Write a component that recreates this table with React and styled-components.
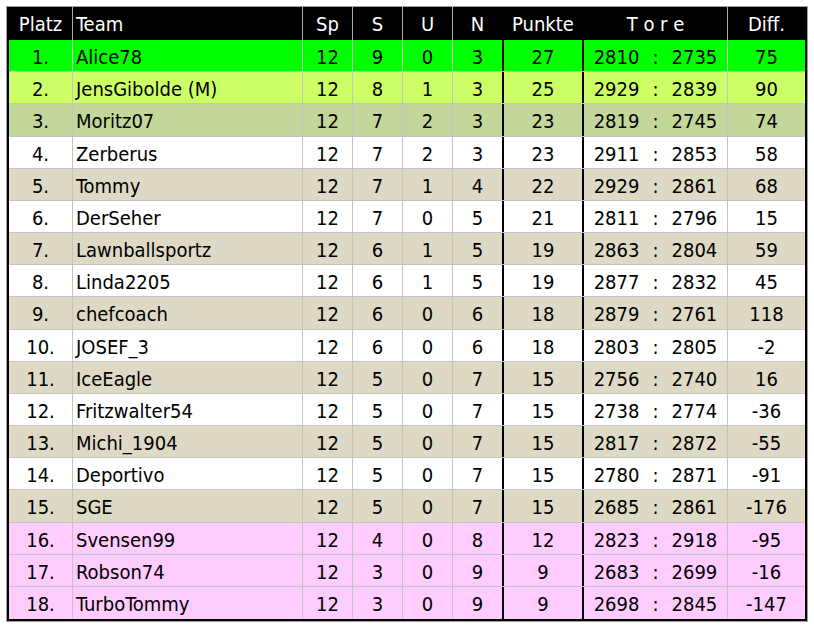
import React from 'react';
import styled, { createGlobalStyle } from 'styled-components';

const GlobalStyle = createGlobalStyle`
  html, body { margin: 0; padding: 0; background: #ffffff; }
  body {
    font-family: "DejaVu Sans Condensed", "DejaVu Sans", sans-serif;
    font-stretch: condensed;
    color: #000;
  }
  * { box-sizing: border-box; }
`;

const COLS = '64px 230px 50px 50px 50px 51px 80px 144px 77px';

const COLORS = {
  green: '#00ff00',
  lime: '#ccff66',
  olive: '#c4d79b',
  white: '#ffffff',
  tan: '#ddd9c4',
  pink: '#ffccff',
};

const Page = styled.div`
  padding: 6px 0 0 6px;
`;

const Board = styled.div`
  width: 802px;
  border: 1px solid #a0a0a0;
`;

const HeadRow = styled.div`
  display: grid;
  grid-template-columns: ${COLS};
  height: 33px;
  background: #000;
  border-left: 2px solid #000;
  border-right: 2px solid #000;
`;

const HeadCell = styled.div`
  display: flex;
  align-items: center;
  justify-content: ${(p) => (p.$align === 'left' ? 'flex-start' : 'center')};
  padding-left: ${(p) => (p.$align === 'left' ? '3px' : '0')};
  color: #ffffff;
  font-size: 20px;
  white-space: pre;
  border-right: ${(p) =>
    p.$last ? 'none' : p.$thick ? '2px solid #000' : '1px solid #a8a8a8'};
`;

const Body = styled.div`
  display: grid;
  grid-template-rows: repeat(18, 1fr);
  height: 581px;
  border: 2px solid #000;
  border-top: none;
`;

const Row = styled.div`
  display: grid;
  grid-template-columns: ${COLS};
  background: ${(p) => COLORS[p.$tone]};
  border-bottom: ${(p) => (p.$last ? 'none' : '1px solid #c4c4c4')};
`;

const Cell = styled.div`
  display: flex;
  align-items: center;
  justify-content: ${(p) => (p.$align === 'left' ? 'flex-start' : 'center')};
  padding-left: ${(p) => (p.$align === 'left' ? '3px' : '0')};
  padding-top: 3px;
  font-size: 20px;
  white-space: nowrap;
  border-right: ${(p) =>
    p.$last ? 'none' : p.$thick ? '2px solid #000' : '1px solid #c4c4c4'};
`;

const GoalPair = styled.div`
  display: grid;
  grid-template-columns: 1fr auto 1fr;
  column-gap: 13px;
  width: 100%;
`;

const GoalLeft = styled.span`
  text-align: right;
`;

const GoalRight = styled.span`
  text-align: left;
`;

const rows = [
  [1, 'Alice78', 12, 9, 0, 3, 27, 2810, 2735, 75, 'green'],
  [2, 'JensGibolde (M)', 12, 8, 1, 3, 25, 2929, 2839, 90, 'lime'],
  [3, 'Moritz07', 12, 7, 2, 3, 23, 2819, 2745, 74, 'olive'],
  [4, 'Zerberus', 12, 7, 2, 3, 23, 2911, 2853, 58, 'white'],
  [5, 'Tommy', 12, 7, 1, 4, 22, 2929, 2861, 68, 'tan'],
  [6, 'DerSeher', 12, 7, 0, 5, 21, 2811, 2796, 15, 'white'],
  [7, 'Lawnballsportz', 12, 6, 1, 5, 19, 2863, 2804, 59, 'tan'],
  [8, 'Linda2205', 12, 6, 1, 5, 19, 2877, 2832, 45, 'white'],
  [9, 'chefcoach', 12, 6, 0, 6, 18, 2879, 2761, 118, 'tan'],
  [10, 'JOSEF_3', 12, 6, 0, 6, 18, 2803, 2805, -2, 'white'],
  [11, 'IceEagle', 12, 5, 0, 7, 15, 2756, 2740, 16, 'tan'],
  [12, 'Fritzwalter54', 12, 5, 0, 7, 15, 2738, 2774, -36, 'white'],
  [13, 'Michi_1904', 12, 5, 0, 7, 15, 2817, 2872, -55, 'tan'],
  [14, 'Deportivo', 12, 5, 0, 7, 15, 2780, 2871, -91, 'white'],
  [15, 'SGE', 12, 5, 0, 7, 15, 2685, 2861, -176, 'tan'],
  [16, 'Svensen99', 12, 4, 0, 8, 12, 2823, 2918, -95, 'pink'],
  [17, 'Robson74', 12, 3, 0, 9, 9, 2683, 2699, -16, 'pink'],
  [18, 'TurboTommy', 12, 3, 0, 9, 9, 2698, 2845, -147, 'pink'],
];

export default function App() {
  return (
    <>
      <GlobalStyle />
      <Page>
        <Board>
          <HeadRow>
            <HeadCell>Platz</HeadCell>
            <HeadCell $align="left">Team</HeadCell>
            <HeadCell>Sp</HeadCell>
            <HeadCell>S</HeadCell>
            <HeadCell>U</HeadCell>
            <HeadCell $thick>N</HeadCell>
            <HeadCell $thick>Punkte</HeadCell>
            <HeadCell>T o r e</HeadCell>
            <HeadCell $last>Diff.</HeadCell>
          </HeadRow>
          <Body>
            {rows.map((r, i) => (
              <Row key={r[0]} $tone={r[10]} $last={i === rows.length - 1}>
                <Cell>{r[0]}.</Cell>
                <Cell $align="left">{r[1]}</Cell>
                <Cell>{r[2]}</Cell>
                <Cell>{r[3]}</Cell>
                <Cell>{r[4]}</Cell>
                <Cell $thick>{r[5]}</Cell>
                <Cell $thick>{r[6]}</Cell>
                <Cell>
                  <GoalPair>
                    <GoalLeft>{r[7]}</GoalLeft>
                    <span>:</span>
                    <GoalRight>{r[8]}</GoalRight>
                  </GoalPair>
                </Cell>
                <Cell $last>{r[9]}</Cell>
              </Row>
            ))}
          </Body>
        </Board>
      </Page>
    </>
  );
}
